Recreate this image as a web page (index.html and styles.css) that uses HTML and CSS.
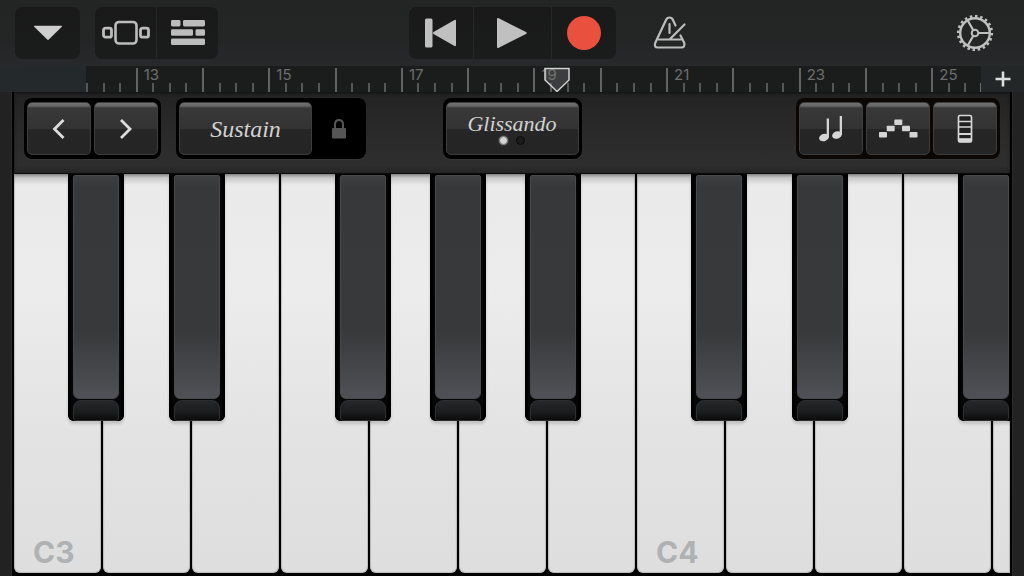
FILE: index.html
```html
<!DOCTYPE html>
<html lang="en">
<head>
<meta charset="utf-8">
<meta name="viewport" content="width=device-width, initial-scale=1">
<title>Keyboard</title>
<link rel="stylesheet" href="styles.css">
</head>
<body>
<div class="app">
  <header class="toolbar">
    <div class="toolbar-left">
      <div class="tool-group">
        <button class="tool tool-menu" aria-label="Menu"><svg width="30" height="16" viewBox="0 0 30 16"><path d="M1.500.8h27q1 .1.300 1L15.800 14.600q-.8.700-1.600 0L1.200 1.800q-.7-.9.300-1z" fill="#cfcfcf"/></svg></button>
      </div>
      <div class="tool-group">
        <button class="tool tool-view" aria-label="Browser"><svg width="48" height="26" viewBox="0 0 48 26" fill="none" stroke="#bcbcbc"><rect x="13.500" y="2" width="21" height="21.500" rx="3.500" stroke-width="2.600"/><rect x="1.500" y="8.200" width="8" height="9" rx="2" stroke-width="2.800"/><rect x="38.500" y="8.200" width="8" height="9" rx="2" stroke-width="2.800"/></svg></button>
        <button class="tool tool-view" aria-label="Tracks"><svg width="34" height="26" viewBox="0 0 34 26" fill="#bcbcbc"><rect width="9.500" height="6.500" rx="1.400"/><rect x="12" width="22" height="6.500" rx="1.400"/><rect y="9.300" width="22" height="6.500" rx="1.400"/><rect x="24.500" y="9.300" width="9.500" height="6.500" rx="1.400"/><rect y="18.600" width="34" height="6.500" rx="1.400"/></svg></button>
      </div>
    </div>
    <div class="tool-group">
      <button class="tool tool-rewind" aria-label="Go to beginning"><svg width="32" height="30" viewBox="0 0 32 30" fill="#c0c0c0"><rect x="0" y=".5" width="7.500" height="29" rx="1.500"/><path d="M29.500 2q1.500-.6 1.500 1v24q0 1.600-1.500 1L8.500 16q-1.400-1 0-2z"/></svg></button>
      <button class="tool tool-play" aria-label="Play"><svg width="32" height="30" viewBox="0 0 32 30"><path d="M1 1.200Q1-.6 2.800.3L30 14q1.600 1 0 2L2.800 29.700Q1 30.600 1 28.800z" fill="#c0c0c0"/></svg></button>
      <button class="tool tool-record" aria-label="Record"><span class="record-dot"></span></button>
    </div>
    <div class="toolbar-right">
      <button class="tool-plain" aria-label="Metronome"><svg width="34" height="34" viewBox="0 0 34 34" fill="none" stroke="#bcbcbc" stroke-width="2.200" stroke-linecap="round" stroke-linejoin="round"><path d="M22.500 9.500 20 4q-1-2.500-3.500-2.500T13 4L2.200 27q-1.200 4.500 2.300 4.500h24q3.500 0 2.800-4.500L27.500 19.500"/><path d="M5.500 23.500h22.500M16.500 8v9M31.500 8.500 17 23"/></svg></button>
      <button class="tool-plain" aria-label="Settings"><svg width="38" height="38" viewBox="0 0 38 38" fill="none" stroke="#c0c0c0"><circle cx="19" cy="19" r="14.800" stroke-width="2.400"/><circle cx="19" cy="19" r="16.800" stroke-width="2.600" stroke-dasharray="2.500 2.778" pathLength="105.560"/><circle cx="19" cy="19" r="3.300" stroke-width="2"/><path d="M22.300 19h11.500M17.300 16.200 11.600 6.300M17.300 21.800l-5.700 9.900" stroke-width="2.200"/></svg></button>
    </div>
  </header>

  <div class="timeline">
    <div class="ruler">
      <div class="bar bar-first"><i></i><i></i><i></i></div>
      <div class="bar"><span>13</span><i></i><i></i><i></i><i></i></div>
      <div class="bar"><i></i><i></i><i></i><i></i></div>
      <div class="bar"><span>15</span><i></i><i></i><i></i><i></i></div>
      <div class="bar"><i></i><i></i><i></i><i></i></div>
      <div class="bar"><span>17</span><i></i><i></i><i></i><i></i></div>
      <div class="bar"><i></i><i></i><i></i><i></i></div>
      <div class="bar"><span>19</span><i></i><i></i><i></i><i></i>
        <svg class="playhead" width="26" height="26" viewBox="0 0 26 26"><path d="M1 1.500h24v11.500L13 24.500 1 13z" fill="#7a7c7e" fill-opacity=".35" stroke="#d0d0d0" stroke-width="1.500"/></svg></div>
      <div class="bar"><i></i><i></i><i></i><i></i></div>
      <div class="bar"><span>21</span><i></i><i></i><i></i><i></i></div>
      <div class="bar"><i></i><i></i><i></i><i></i></div>
      <div class="bar"><span>23</span><i></i><i></i><i></i><i></i></div>
      <div class="bar"><i></i><i></i><i></i><i></i></div>
      <div class="bar bar-last"><span>25</span><i></i><i></i><i></i></div>
    </div>
    <button class="add" aria-label="Add section"><svg width="16" height="16" viewBox="0 0 16 16"><path d="M8 .5v15M.5 8h15" stroke="#dcdedd" stroke-width="2.600"/></svg></button>
  </div>

  <main class="instrument">
    <div class="panel">
      <div class="panel-left">
        <div class="well">
          <button class="key-button" aria-label="Octave down"><svg width="14" height="20" viewBox="0 0 14 20"><path d="M11.500 1 2.500 10l9 9" fill="none" stroke="#dcdcdc" stroke-width="2.800"/></svg></button>
          <button class="key-button" aria-label="Octave up"><svg width="14" height="20" viewBox="0 0 14 20"><path d="M2 1 11 10l-9 9" fill="none" stroke="#dcdcdc" stroke-width="2.800"/></svg></button>
        </div>
        <div class="well">
          <button class="key-button key-wide script">Sustain</button>
          <button class="lock" aria-label="Lock sustain"><svg width="14" height="20" viewBox="0 0 14 20"><path d="M3 10V5.500q0-4.500 4-4.500t4 4.500V10" fill="none" stroke="#555" stroke-width="2"/><rect y="9" width="14" height="10.500" rx="1" fill="#555"/></svg></button>
        </div>
      </div>
      <div class="well">
        <button class="key-button key-wide key-mode script">Glissando<span class="dots"><span class="dot dot-on"></span><span class="dot"></span></span></button>
      </div>
      <div class="panel-right">
        <div class="well well-warm">
          <button class="key-button" aria-label="Chords"><svg width="24" height="26" viewBox="0 0 24 26" fill="#d5d5d5"><ellipse cx="5" cy="21.500" rx="5" ry="3.600" transform="rotate(-20 5 21.500)"/><rect x="7.700" y="2.500" width="2.300" height="19"/><ellipse cx="18" cy="19" rx="5" ry="3.600" transform="rotate(-20 18 19)"/><rect x="20.700" y="0" width="2.300" height="19"/></svg></button>
          <button class="key-button" aria-label="Arpeggiator"><svg width="40" height="20" viewBox="0 0 40 20" fill="#d5d5d5"><rect x="1" y="13" width="8" height="5.500" rx=".8"/><rect x="8.700" y="6.800" width="8" height="5.500" rx=".8"/><rect x="16.300" y=".6" width="8" height="5.500" rx=".8"/><rect x="24" y="6.800" width="8" height="5.500" rx=".8"/><rect x="31.500" y="13" width="8" height="5.500" rx=".8"/></svg></button>
          <button class="key-button" aria-label="Scale"><svg width="16" height="30" viewBox="0 0 16 30"><rect x="1.500" y="1.500" width="13" height="26.500" rx="1.500" fill="#202020" stroke="#d5d5d5" stroke-width="1.700"/><path d="M2 7.500h12M2 13h12" stroke="#d5d5d5" stroke-width="1.300"/><path d="M2 20h12" stroke="#d5d5d5" stroke-width="2"/><path d="M2 26.200h12" stroke="#d5d5d5" stroke-width="4"/></svg></button>
        </div>
      </div>
    </div>

    <div class="keyboard">
      <div class="slot"><button class="white">C3</button><button class="black sits-left" aria-label="C sharp 3"></button></div>
      <div class="slot"><button class="white" aria-label="D3"></button><button class="black sits-right" aria-label="D sharp 3"></button></div>
      <div class="slot"><button class="white" aria-label="E3"></button></div>
      <div class="slot"><button class="white" aria-label="F3"></button><button class="black sits-left" aria-label="F sharp 3"></button></div>
      <div class="slot"><button class="white" aria-label="G3"></button><button class="black sits-middle" aria-label="G sharp 3"></button></div>
      <div class="slot"><button class="white" aria-label="A3"></button><button class="black sits-right" aria-label="A sharp 3"></button></div>
      <div class="slot"><button class="white" aria-label="B3"></button></div>
      <div class="slot"><button class="white">C4</button><button class="black sits-left" aria-label="C sharp 4"></button></div>
      <div class="slot"><button class="white" aria-label="D4"></button><button class="black sits-right" aria-label="D sharp 4"></button></div>
      <div class="slot"><button class="white" aria-label="E4"></button></div>
      <div class="slot"><button class="white" aria-label="F4"></button><button class="black sits-left" aria-label="F sharp 4"></button></div>
      <div class="slot"><button class="white white-cut" aria-label="G4"></button></div>
    </div>
  </main>
</div>
</body>
</html>
```
FILE: styles.css
```css
* {
  box-sizing: border-box;
}

body {
  margin: 0;
  background: #222;
  font-family: Inter, "Liberation Sans", sans-serif;
}

button {
  display: flex;
  align-items: center;
  justify-content: center;
  margin: 0;
  padding: 0;
  border: 0;
  background: none;
  color: inherit;
  font: inherit;
}

svg {
  display: block;
  flex: none;
}

.app {
  display: flex;
  flex-direction: column;
  min-height: 100vh;
}

/* Toolbar */
.toolbar {
  display: grid;
  grid-template-columns: 1fr auto 1fr;
  padding: 7px 15px;
  background: linear-gradient(#232524, #242525 60%, #28292b);
}

.toolbar-left {
  display: flex;
  gap: 15px;
}

.toolbar-right {
  display: flex;
  align-items: center;
  justify-content: space-between;
  padding: 0 15px 0 37px;
}

.tool-group {
  display: flex;
  gap: 1px;
  overflow: hidden;
  border-radius: 7px;
  background: #262727;
}

.tool {
  height: 52px;
  background: linear-gradient(#181918, #1b1c1c);
}

.tool-menu {
  width: 65px;
}

.tool-view {
  width: 61px;
}

.tool-rewind,
.tool-record {
  width: 64px;
}

.tool-play {
  width: 77px;
}

.record-dot {
  width: 34px;
  height: 34px;
  border-radius: 50%;
  background: #e9503e;
}

/* Timeline */
.timeline {
  display: flex;
  height: 26px;
  padding-left: 86px;
  background: linear-gradient(90deg, #24292b, #242727);
}

.ruler {
  display: grid;
  flex: 1;
  grid-template-columns: 3fr repeat(12, 4fr) 3fr;
  background: #1b1d1c;
}

.bar {
  position: relative;
  display: flex;
  align-items: flex-end;
}

.bar i {
  flex: 1;
  height: 9px;
  border-left: 2px solid #555756;
}

.bar i:first-of-type {
  height: 24px;
  border-color: #626463;
}

.bar-first i:first-of-type {
  height: 9px;
  border-color: #555756;
}

.bar-last {
  border-right: 1px solid;
  border-image: linear-gradient(transparent 65%, #6c6e6d 65%) 1;
}

.bar span {
  position: absolute;
  top: 0;
  left: 8px;
  color: #6c6e6d;
  font-size: 15px;
  line-height: 18px;
}

.playhead {
  position: absolute;
  top: 1px;
  left: 11px;
}

.add {
  width: 43px;
}

/* Instrument */
.instrument {
  display: flex;
  flex: 1;
  flex-direction: column;
  margin: 0 12px;
  border: solid #000;
  border-width: 0 2px;
  box-shadow: 0 0 0 1px #2b2b2b;
  clip-path: inset(0 -1px);
}

.panel {
  display: grid;
  grid-template-columns: 1fr auto 1fr;
  padding: 6px 10px 14px;
  border-bottom: 1px solid #0c0c0c;
  background: linear-gradient(#232323, #2a2a2a 50%, #2e2e2e 90%, #252525);
  box-shadow: inset 0 2px 3px #171717;
}

.panel-left {
  display: flex;
  gap: 15px;
}

.panel-right {
  display: flex;
  justify-content: flex-end;
}

.well {
  display: flex;
  gap: 3px;
  padding: 4px 3px;
  border-radius: 8px;
  background: #000;
  box-shadow: 0 1px 1px #383838;
}

.well-warm {
  background: #0b0705;
}

.key-button {
  width: 64px;
  height: 53px;
  border: 1px solid #3d3d3d;
  border-radius: 5px;
  background: linear-gradient(#727272, #666 3px, #383838 5px, #333 50%, #262626 50%, #252525);
}

.key-wide {
  width: 133px;
}

.script {
  color: #d2d2d2;
  font-family: "Snell Roundhand", "Liberation Serif", serif;
  font-size: 24px;
  font-style: italic;
  line-height: 24px;
}

.key-mode {
  flex-direction: column;
  font-size: 22px;
}

.dots {
  display: flex;
  gap: 8px;
}

.dot {
  width: 9px;
  height: 9px;
  border: 1px solid #090909;
  border-radius: 50%;
  background: #1b1b1b;
}

.dot-on {
  border-color: #777;
  background: #d4d4d4;
  box-shadow: 0 0 2px #777;
}

.lock {
  width: 48px;
}

/* Piano keys */
.keyboard {
  display: grid;
  flex: 1;
  grid-template-columns: repeat(11, 87fr) 17fr;
  gap: 2px;
  overflow: hidden;
  padding-bottom: 3px;
  background: #000;
}

.slot {
  position: relative;
  display: flex;
  min-width: 0;
}

.white {
  flex: 1;
  align-items: flex-end;
  justify-content: flex-start;
  padding: 0 0 3px 19px;
  border-radius: 0 0 6px 6px;
  background: linear-gradient(#8c8c8c, #c9c9c9 4px, #eaeaea 11px, #ececec 30%, #e3e3e3 65%, #dedede);
  box-shadow: inset 0 0 1px 1px rgba(120, 120, 120, 0.35);
  color: #b0b1b2;
  font-size: 30px;
  font-weight: 700;
  line-height: 36px;
}

.white-cut {
  padding: 0;
  border-radius: 0 0 0 6px;
}

.black {
  position: absolute;
  z-index: 1;
  top: 0;
  display: block;
  width: 64%;
  height: 62%;
  padding: 1px 5px 4px;
  border-radius: 0 0 6px 6px;
  background: #060606;
  box-shadow: 0 3px 3px rgba(0, 0, 0, 0.15), inset 0 0 0 3px #000;
}

.black::before,
.black::after {
  display: block;
  border: 1px solid #2d2e30;
  content: "";
}

.black::before {
  height: calc(100% - 20px);
  border-color: #48494b;
  border-radius: 2px 2px 6px 6px;
  background: linear-gradient(#3e3f41, #37383a 5%, #38393b 70%, #505156);
}

.black::after {
  height: 19px;
  margin-top: 1px;
  border-radius: 8px 8px 3px 3px;
  background: linear-gradient(#25272a, #1b1c1d 60%, #0b0b0b);
}

.sits-left {
  left: 62%;
}

.sits-middle {
  left: 69%;
}

.sits-right {
  left: 76%;
}
```
